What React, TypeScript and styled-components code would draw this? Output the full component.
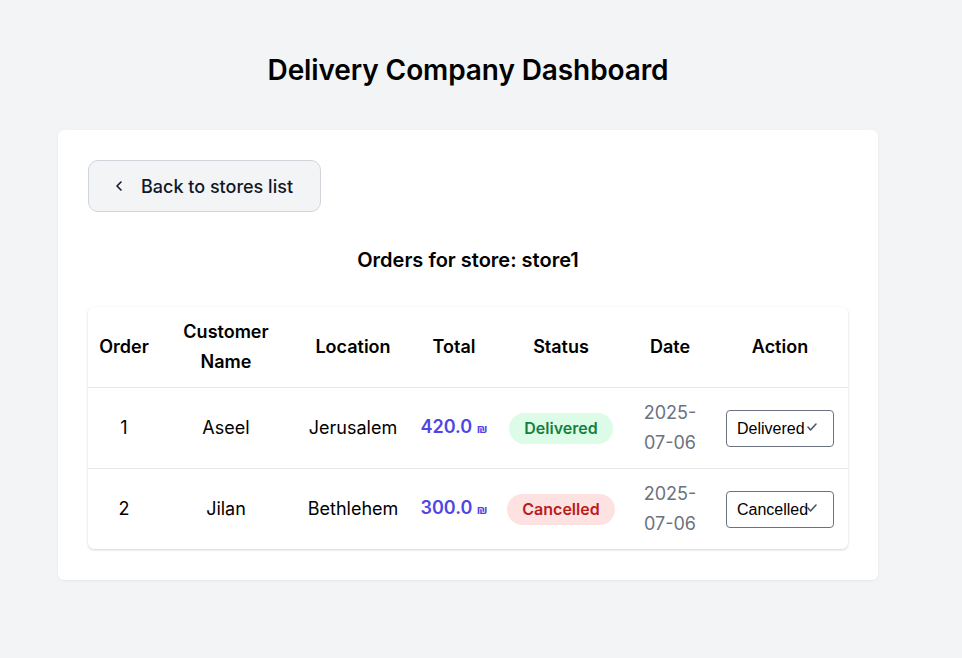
import React from 'react';
import styled, { createGlobalStyle } from 'styled-components';

type Status = 'Delivered' | 'Cancelled';

interface Order {
    id: number;
    customer: string;
    location: string;
    total: string;
    status: Status;
    date: [string, string];
}

const orders: Array<Order> = [
    { id: 1, customer: 'Aseel', location: 'Jerusalem', total: '420.0', status: 'Delivered', date: ['2025-', '07-06'] },
    { id: 2, customer: 'Jilan', location: 'Bethlehem', total: '300.0', status: 'Cancelled', date: ['2025-', '07-06'] },
];

const columns = [
    { label: 'Order', width: 72 },
    { label: 'Customer Name', width: 132 },
    { label: 'Location', width: 122 },
    { label: 'Total', width: 80 },
    { label: 'Status', width: 134 },
    { label: 'Date', width: 84 },
    { label: 'Action', width: 136 },
];

const GlobalStyle = createGlobalStyle`
    body {
        margin: 0;
        background: #f3f4f6;
        font-family: Inter, "Open Sans", sans-serif;
        color: #111827;
    }
`;

const ChevronLeft = () => (
    <svg width="16" height="16" viewBox="0 0 24 24" fill="none" stroke="#111827" strokeWidth="2.4" strokeLinecap="round" strokeLinejoin="round">
        <path d="M15 18l-6-6 6-6" />
    </svg>
);

const Check = () => (
    <svg width="12" height="10" viewBox="0 0 12 10" fill="none" stroke="#4b5563" strokeWidth="1.6" strokeLinecap="round" strokeLinejoin="round">
        <path d="M2 5l2.5 3L10 2" />
    </svg>
);

export default function App() {
    return (
        <Page>
            <GlobalStyle />
            <Title>Delivery Company Dashboard</Title>
            <Card>
                <BackButton>
                    <ChevronLeft />
                    Back to stores list
                </BackButton>
                <Subtitle>Orders for store: store1</Subtitle>
                <TableWrap>
                    <Table>
                        <colgroup>
                            {columns.map((c) => (
                                <col key={c.label} style={{ width: c.width }} />
                            ))}
                        </colgroup>
                        <thead>
                            <tr>
                                {columns.map((c) => (
                                    <Th key={c.label}>{c.label}</Th>
                                ))}
                            </tr>
                        </thead>
                        <tbody>
                            {orders.map((o) => (
                                <tr key={o.id}>
                                    <Td>{o.id}</Td>
                                    <Td>{o.customer}</Td>
                                    <Td>{o.location}</Td>
                                    <Td>
                                        <Total>
                                            {o.total} <Shekel>₪</Shekel>
                                        </Total>
                                    </Td>
                                    <Td>
                                        <Badge $status={o.status}>{o.status}</Badge>
                                    </Td>
                                    <Td>
                                        <DateText>
                                            {o.date[0]}
                                            <br />
                                            {o.date[1]}
                                        </DateText>
                                    </Td>
                                    <Td>
                                        <SelectBox>
                                            <Select defaultValue={o.status}>
                                                <option>Delivered</option>
                                                <option>Cancelled</option>
                                            </Select>
                                            <SelectIcon>
                                                <Check />
                                            </SelectIcon>
                                        </SelectBox>
                                    </Td>
                                </tr>
                            ))}
                        </tbody>
                    </Table>
                </TableWrap>
            </Card>
        </Page>
    );
}

const Page = styled.div`
    display: flex;
    flex-direction: column;
    width: 878px;
    padding: 50px 0 78px 58px;
    min-height: 658px;
    box-sizing: border-box;
`;

const Title = styled.h1`
    margin: 0 0 40px 0;
    text-align: center;
    font-size: 28px;
    font-weight: 600;
    line-height: 40px;
    letter-spacing: -0.1px;
    color: #000;
`;

const Card = styled.div`
    width: 820px;
    box-sizing: border-box;
    background: #fff;
    border-radius: 6px;
    padding: 30px 30px 31px 30px;
    box-shadow: 0 1px 3px rgba(0, 0, 0, 0.06);
    display: flex;
    flex-direction: column;
`;

const BackButton = styled.button`
    align-self: flex-start;
    display: flex;
    align-items: center;
    gap: 14px;
    height: 52px;
    padding: 0 27px 0 22px;
    background: #f3f4f6;
    border: 1px solid #d1d5db;
    border-radius: 10px;
    font-family: Inter, "Open Sans", sans-serif;
    font-size: 18px;
    font-weight: 500;
    color: #111827;
`;

const Subtitle = styled.h2`
    margin: 34px 0 33px 0;
    text-align: center;
    font-size: 20px;
    font-weight: 600;
    line-height: 28px;
    color: #000;
`;

const TableWrap = styled.div`
    background: #fff;
    border-radius: 6px;
    box-shadow: 0 1px 3px rgba(0, 0, 0, 0.12), 0 1px 2px rgba(0, 0, 0, 0.06);
    overflow: hidden;
`;

const Table = styled.table`
    width: 100%;
    border-collapse: collapse;
    table-layout: fixed;
`;

const Th = styled.th`
    height: 80px;
    padding: 0 6px;
    font-size: 18px;
    font-weight: 600;
    line-height: 30px;
    color: #000;
    text-align: center;
    border-bottom: 1px solid #e5e7eb;
`;

const Td = styled.td`
    height: 80px;
    padding: 0 6px;
    font-size: 18px;
    line-height: 30px;
    color: #000;
    text-align: center;
    border-bottom: 1px solid #e5e7eb;
    tr:last-child & {
        border-bottom: none;
    }
`;

const Total = styled.span`
    color: #4f46e5;
    font-weight: 600;
    white-space: nowrap;
`;

const Shekel = styled.span`
    font-size: 12px;
`;

const Badge = styled.span<{ $status: Status }>`
    display: inline-block;
    padding: 0 15px;
    line-height: 31px;
    border-radius: 999px;
    font-size: 16px;
    font-weight: 600;
    background: ${({ $status }) => ($status === 'Delivered' ? '#dcfce7' : '#fee2e2')};
    color: ${({ $status }) => ($status === 'Delivered' ? '#15803d' : '#b91c1c')};
`;

const DateText = styled.span`
    color: #6b7280;
`;

const SelectBox = styled.div`
    position: relative;
    display: inline-block;
`;

const Select = styled.select`
    appearance: none;
    width: 108px;
    height: 37px;
    padding: 0 10px;
    border: 1px solid #6b7280;
    border-radius: 4px;
    background: #fff;
    font-family: "Liberation Sans", Arial, sans-serif;
    font-size: 16px;
    color: #000;
`;

const SelectIcon = styled.span`
    position: absolute;
    right: 16px;
    top: 12px;
    pointer-events: none;
    display: flex;
`;
